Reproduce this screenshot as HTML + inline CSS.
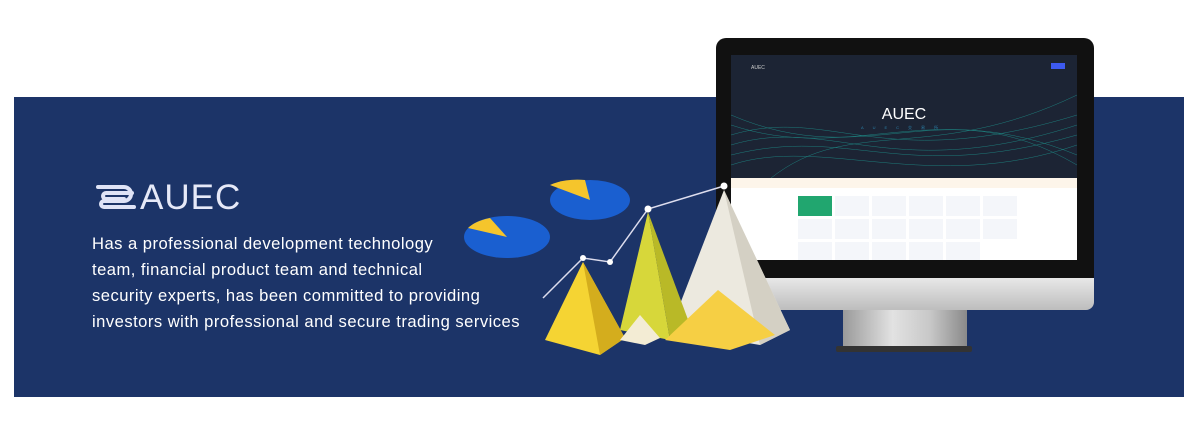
<!DOCTYPE html>
<html><head><meta charset="utf-8"><style>
body{margin:0;width:1200px;height:437px;background:#fff;position:relative;overflow:hidden;font-family:"Liberation Sans",sans-serif}
.band{position:absolute;left:14px;top:97px;width:1170px;height:300px;background:#1c3468}
.logo{position:absolute;left:92px;top:178px;color:#e6e9f8;font-size:35px;font-weight:400;letter-spacing:1px}
.txt{position:absolute;left:92px;top:231px;color:#fff;font-size:16.6px;line-height:26px;white-space:nowrap;letter-spacing:0.47px}
.mon{position:absolute;left:716px;top:38px;width:378px;height:240px;background:#111;border-radius:10px 10px 0 0}
.chin{position:absolute;left:716px;top:278px;width:378px;height:32px;background:linear-gradient(#e8e8e8,#bdbdbd);border-radius:0 0 8px 8px}
.stand{position:absolute;left:843px;top:310px;width:124px;height:40px;background:linear-gradient(90deg,#9a9a9a,#e2e2e2 40%,#c8c8c8 70%,#8a8a8a)}
.base{position:absolute;left:836px;top:346px;width:136px;height:6px;background:#333;border-radius:2px}
.scr{position:absolute;left:731px;top:55px;width:346px;height:205px;background:#fff;overflow:hidden}
.dark{position:absolute;left:0;top:0;width:346px;height:123px;background:#1c2434}
.cell{position:absolute;width:34px;height:20px;background:#f4f6fa;font-size:4px;color:#333}
</style></head><body>
<div class="band"></div>
<div class="logo"><svg width="46" height="32" viewBox="0 0 46 32" style="vertical-align:-4px;margin-right:2px"><path d="M6 6h26a7 7 0 0 1 0 14H12a3 3 0 0 0 0 6h30M40 12H14a3 3 0 0 0 0 6h18" fill="none" stroke="#dfe3f6" stroke-width="4" stroke-linecap="round"/></svg>AUEC</div>
<div class="txt">Has a professional development technology<br>team, financial product team and technical<br>security experts, has been committed to providing<br>investors with professional and secure trading services</div>
<div class="mon"></div>
<div class="scr"><div class="dark">
<svg width="346" height="123"><g fill="none" stroke="#1fa39a" stroke-width=".5" opacity=".7"><path d="M0 80 C100 50 150 120 346 60"/><path d="M0 90 C100 60 160 130 346 70"/><path d="M0 100 C120 70 170 130 346 80"/><path d="M0 70 C120 110 200 40 346 100"/><path d="M0 60 C140 120 210 30 346 110"/><path d="M40 123 C120 60 200 110 346 40"/><path d="M0 110 C90 80 200 140 346 90"/></g>
<text x="173" y="64" fill="#fff" font-size="16" text-anchor="middle" font-family="Liberation Sans">AUEC</text>
<text x="173" y="74" fill="#2a7fa8" font-size="4" text-anchor="middle" letter-spacing="9">AUEC交易所</text>
<text x="20" y="14" fill="#ccc" font-size="5">AUEC</text>
<rect x="320" y="8" width="14" height="6" fill="#3d5af1"/></svg></div>
<div style="position:absolute;top:123px;width:346px;height:10px;background:#fdf5ea"></div>
<div style="position:absolute;left:67px;top:141px;width:34px;height:20px;background:#21a66f"></div>
<div class="cell" style="left:104px;top:141px"></div><div class="cell" style="left:141px;top:141px"></div><div class="cell" style="left:178px;top:141px"></div><div class="cell" style="left:215px;top:141px"></div><div class="cell" style="left:252px;top:141px"></div>
<div class="cell" style="left:67px;top:164px"></div><div class="cell" style="left:104px;top:164px"></div><div class="cell" style="left:141px;top:164px"></div><div class="cell" style="left:178px;top:164px"></div><div class="cell" style="left:215px;top:164px"></div><div class="cell" style="left:252px;top:164px"></div>
<div class="cell" style="left:67px;top:187px"></div><div class="cell" style="left:104px;top:187px"></div><div class="cell" style="left:141px;top:187px"></div><div class="cell" style="left:178px;top:187px"></div><div class="cell" style="left:215px;top:187px"></div>
</div>
<div class="chin"></div><div class="stand"></div><div class="base"></div>
<svg style="position:absolute;left:0;top:0" width="1200" height="437">
<ellipse cx="590" cy="200" rx="40" ry="20" fill="#1a5fd0"/><path d="M590 200 L550 185 A40 20 0 0 1 585 180Z" fill="#f5c52c"/>
<ellipse cx="507" cy="237" rx="43" ry="21" fill="#1a5fd0"/><path d="M507 237 L468 228 A43 21 0 0 1 490 218Z" fill="#f5c52c"/>
<polyline points="543,298 583,258 610,262 648,209 724,186" fill="none" stroke="#dde" stroke-width="1.5"/>
<circle cx="583" cy="258" r="3" fill="#fff"/><circle cx="610" cy="262" r="3" fill="#fff"/><circle cx="648" cy="209" r="3.5" fill="#fff"/><circle cx="724" cy="186" r="3.5" fill="#fff"/>
<polygon points="724,190 670,330 760,345 790,330" fill="#ece9df"/><polygon points="724,190 760,345 790,330" fill="#d4d0c4"/>
<polygon points="648,212 620,330 670,340" fill="#d7d73a"/><polygon points="648,212 670,340 690,325" fill="#b9b927"/>
<polygon points="583,262 545,340 600,355 625,338" fill="#f5d433"/><polygon points="583,262 600,355 625,338" fill="#d4ad1d"/>
<polygon points="718,290 665,340 730,350 775,335" fill="#f6cf44"/>
<polygon points="640,315 620,340 645,345 660,338" fill="#f3ecd4"/>
</svg>
</body></html>
